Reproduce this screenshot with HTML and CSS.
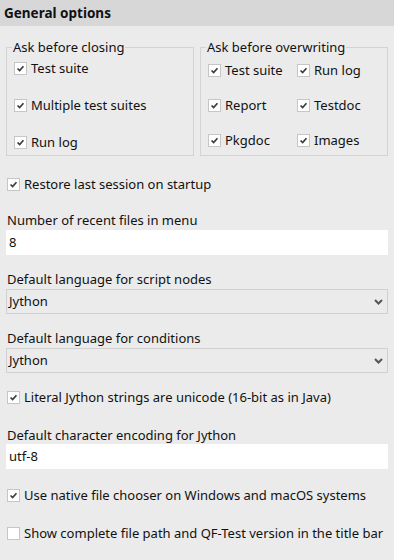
FILE: index.html
```
<!DOCTYPE html>
<html lang="en">
<head>
    <meta charset="UTF-8">
    <title>General options</title>
    <link rel="stylesheet" href="styles.css">
</head>
<body>
    <div class="header">General options</div>

    <div class="content">
        <!-- Confirmation groups -->
        <div class="groups">
            <fieldset class="group group-closing">
                <legend>Ask before closing</legend>
                <label class="check"><span class="box"><svg viewBox="0 0 13 13"><path d="M3 6.5 5.5 9 10 3.8"/></svg></span>Test suite</label>
                <label class="check"><span class="box"><svg viewBox="0 0 13 13"><path d="M3 6.5 5.5 9 10 3.8"/></svg></span>Multiple test suites</label>
                <label class="check"><span class="box"><svg viewBox="0 0 13 13"><path d="M3 6.5 5.5 9 10 3.8"/></svg></span>Run log</label>
            </fieldset>
            <fieldset class="group group-overwrite">
                <legend>Ask before overwriting</legend>
                <label class="check"><span class="box"><svg viewBox="0 0 13 13"><path d="M3 6.5 5.5 9 10 3.8"/></svg></span>Test suite</label>
                <label class="check"><span class="box"><svg viewBox="0 0 13 13"><path d="M3 6.5 5.5 9 10 3.8"/></svg></span>Run log</label>
                <label class="check"><span class="box"><svg viewBox="0 0 13 13"><path d="M3 6.5 5.5 9 10 3.8"/></svg></span>Report</label>
                <label class="check"><span class="box"><svg viewBox="0 0 13 13"><path d="M3 6.5 5.5 9 10 3.8"/></svg></span>Testdoc</label>
                <label class="check"><span class="box"><svg viewBox="0 0 13 13"><path d="M3 6.5 5.5 9 10 3.8"/></svg></span>Pkgdoc</label>
                <label class="check"><span class="box"><svg viewBox="0 0 13 13"><path d="M3 6.5 5.5 9 10 3.8"/></svg></span>Images</label>
            </fieldset>
        </div>

        <label class="check check-restore"><span class="box"><svg viewBox="0 0 13 13"><path d="M3 6.5 5.5 9 10 3.8"/></svg></span>Restore last session on startup</label>

        <div class="field field-recent">
            <div class="field-label">Number of recent files in menu</div>
            <div class="textbox">8</div>
        </div>

        <div class="field field-script">
            <div class="field-label">Default language for script nodes</div>
            <div class="combo">Jython<svg class="arrow" viewBox="0 0 9 6"><path d="M1 1 4.5 4.5 8 1"/></svg></div>
        </div>

        <div class="field field-cond">
            <div class="field-label">Default language for conditions</div>
            <div class="combo">Jython<svg class="arrow" viewBox="0 0 9 6"><path d="M1 1 4.5 4.5 8 1"/></svg></div>
        </div>

        <label class="check check-unicode"><span class="box"><svg viewBox="0 0 13 13"><path d="M3 6.5 5.5 9 10 3.8"/></svg></span>Literal Jython strings are unicode (16-bit as in Java)</label>

        <div class="field field-encoding">
            <div class="field-label">Default character encoding for Jython</div>
            <div class="textbox">utf-8</div>
        </div>

        <label class="check check-native"><span class="box"><svg viewBox="0 0 13 13"><path d="M3 6.5 5.5 9 10 3.8"/></svg></span>Use native file chooser on Windows and macOS systems</label>

        <label class="check check-title"><span class="box empty"></span>Show complete file path and QF-Test version in the title bar</label>
    </div>
</body>
</html>
```
FILE: styles.css
```
body {
    margin: 0;
    background-color: #ebebeb;
    font-family: "Noto Sans", "Open Sans", sans-serif;
    font-size: 13px;
    color: #111;
}
.header {
    height: 26px;
    line-height: 26px;
    padding-left: 4px;
    background-color: #d7d7d7;
    font-weight: bold;
    font-size: 13.5px;
}
.content {
    padding: 0 6px 0 7px;
}
.groups {
    display: flex;
    gap: 6px;
    margin: 13px 0 0 -1px;
}
.group {
    margin: 0;
    border: 1px solid #d3d3d3;
    min-width: 0;
}
.group legend {
    padding: 0 1px;
    margin-left: -2px;
    line-height: 16px;
}
.group-closing {
    width: 188px;
    box-sizing: border-box;
    padding: 3px 0 3px 7px;
    display: flex;
    flex-direction: column;
    gap: 17px;
}
.group-overwrite {
    flex: 1;
    padding: 5px 0 5px 7px;
    display: grid;
    grid-template-columns: 89px 1fr;
    row-gap: 15px;
}
.check {
    display: flex;
    align-items: center;
    height: 20px;
    white-space: nowrap;
}
.box {
    width: 11px;
    height: 11px;
    border: 1px solid #c6c6c6;
    background-color: #fff;
    margin-right: 4px;
    flex-shrink: 0;
    display: flex;
}
.box svg {
    width: 11px;
    height: 11px;
}
.box path {
    fill: none;
    stroke: #3c3c3c;
    stroke-width: 2;
}
.check-restore {
    margin-top: 18px;
}
.check-unicode {
    margin-top: 14px;
}
.check-native {
    margin-top: 16px;
}
.check-title {
    margin-top: 18px;
}
.field-label {
    line-height: 18px;
    margin-bottom: 1px;
}
.field-recent {
    margin-top: 17px;
}
.field-script,
.field-cond {
    margin-top: 15px;
}
.field-encoding {
    margin-top: 19px;
}
.field-encoding .field-label {
    margin-bottom: 0;
}
.textbox {
    height: 25px;
    line-height: 25px;
    padding-left: 3px;
    margin-left: -1px;
    background-color: #fff;
}
.combo {
    height: 23px;
    line-height: 23px;
    padding-left: 2px;
    margin-left: -1px;
    border: 1px solid #d0d0d0;
    display: flex;
    justify-content: space-between;
    align-items: center;
}
.combo .arrow {
    width: 9px;
    height: 6px;
    margin-right: 4px;
}
.combo .arrow path {
    fill: none;
    stroke: #555;
    stroke-width: 2;
}
```
